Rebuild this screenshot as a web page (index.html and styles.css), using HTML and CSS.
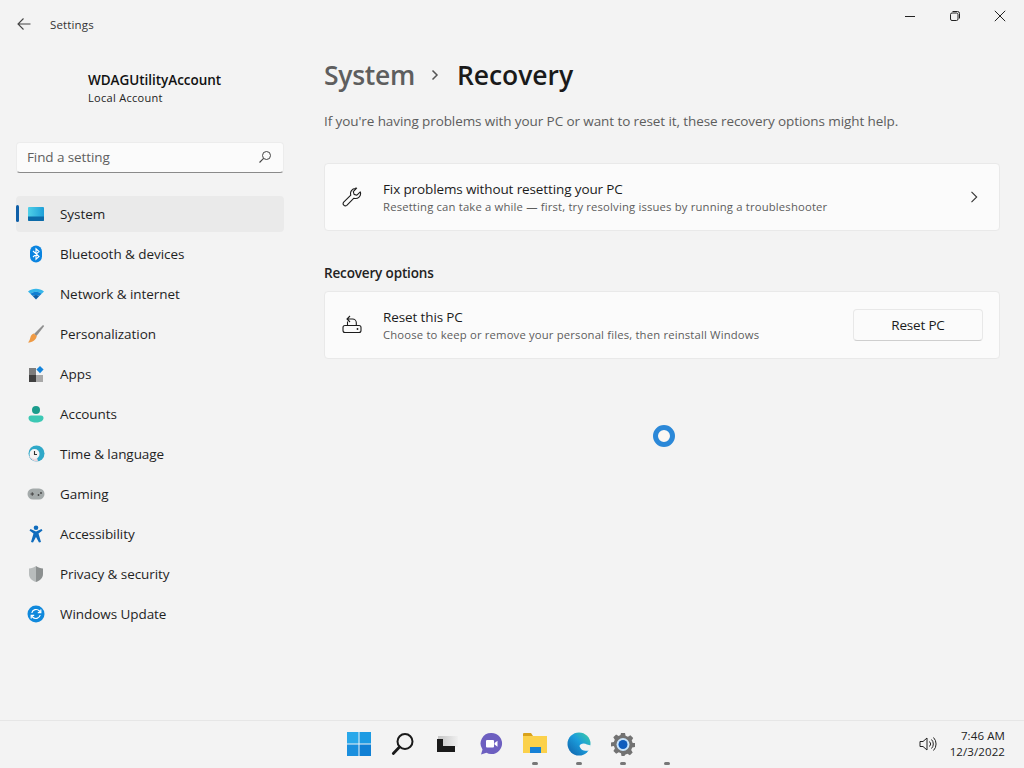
FILE: index.html
```html
<!DOCTYPE html>
<html lang="en">
<head>
<meta charset="utf-8">
<title>Settings</title>
<link rel="stylesheet" href="styles.css">
</head>
<body>
<div class="window">
  <header class="titlebar">
    <svg class="back" width="16" height="16" viewBox="0 0 16 16"><path d="M14.500 8H2M7.500 2.500 2 8l5.500 5.500" fill="none" stroke="#444" stroke-width="1.100"/></svg>
    <span class="app-title">Settings</span>
    <div class="controls">
      <svg width="12" height="12" viewBox="0 0 12 12"><path d="M1 6.500h10" stroke="#222" stroke-width="1"/></svg>
      <svg width="12" height="12" viewBox="0 0 12 12"><rect x="1.500" y="3" width="7.500" height="7.500" rx="1.500" fill="none" stroke="#222"/><path d="M3.500 1.500h5a2 2 0 0 1 2 2v5" fill="none" stroke="#222"/></svg>
      <svg width="12" height="12" viewBox="0 0 12 12"><path d="M.8.8l10.400 10.400M11.200.8.8 11.200" stroke="#222" stroke-width="1"/></svg>
    </div>
  </header>
  <div class="columns">
    <aside class="sidebar">
      <div class="account">
        <div class="account-name">WDAGUtilityAccount</div>
        <div class="account-type">Local Account</div>
      </div>
      <div class="search">
        <span class="search-text">Find a setting</span>
        <svg width="14" height="14" viewBox="0 0 14 14"><circle cx="8.500" cy="5.500" r="4" fill="none" stroke="#444"/><path d="M5.600 8.400 1.500 12.500" stroke="#444" stroke-width="1.100"/></svg>
      </div>
      <nav class="nav">
        <div class="nav-item active">
          <span class="marker"></span>
          <svg class="nav-icon" width="20" height="20" viewBox="0 0 20 20"><defs><linearGradient id="sys" x1="0" y1="0" x2="1" y2="0"><stop offset="0" stop-color="#4fd0e8"/><stop offset="1" stop-color="#1e9fd8"/></linearGradient></defs><rect x="2" y="3" width="16" height="14" rx="1" fill="url(#sys)"/><path d="M2 12.500h16V16a1 1 0 0 1-1 1H3a1 1 0 0 1-1-1z" fill="#0c6aa8"/></svg>
          <span>System</span>
        </div>
        <div class="nav-item">
          <svg class="nav-icon" width="20" height="20" viewBox="0 0 20 20"><rect x="4" y="1.500" width="12" height="17" rx="6" fill="#0a84e0"/><path d="M7 7l6 5.500-3 2.700V4.800l3 2.700L7 13" fill="none" stroke="#fff" stroke-width="1.100"/></svg>
          <span>Bluetooth &amp; devices</span>
        </div>
        <div class="nav-item">
          <svg class="nav-icon" width="20" height="20" viewBox="0 0 20 20"><path d="M2 7.500C6.500 3.800 13.500 3.800 18 7.500l-2.300 2.300C12 7 8 7 4.300 9.800z" fill="#35b6ea"/><path d="M4.300 9.800C8 7 12 7 15.700 9.800l-2.400 2.300c-2-1.400-4.600-1.400-6.600 0z" fill="#0f7fd2"/><path d="M6.700 12.100c2-1.400 4.600-1.400 6.600 0L10 15.500z" fill="#0c5fa8"/></svg>
          <span>Network &amp; internet</span>
        </div>
        <div class="nav-item">
          <svg class="nav-icon" width="20" height="20" viewBox="0 0 20 20"><path d="M17 1 18.200 2 10.500 12 8 10z" fill="#8f8f8f"/><path d="M7.800 9.500 10.800 12C10 16 6.500 18.500 2 18.500c1.500-1.500 2-3.500 2.500-5.500.5-1.800 1.800-3 3.300-3.500z" fill="#ee9a45"/></svg>
          <span>Personalization</span>
        </div>
        <div class="nav-item">
          <svg class="nav-icon" width="20" height="20" viewBox="0 0 20 20"><rect x="3" y="4" width="7" height="7" fill="#7c7c7c"/><rect x="3" y="11" width="7" height="7" fill="#404040"/><rect x="10" y="11" width="7" height="7" fill="#a8a8a8"/><path d="M14 2l3.600 3.600L14 9.200l-3.600-3.600z" fill="#1384dc"/></svg>
          <span>Apps</span>
        </div>
        <div class="nav-item">
          <svg class="nav-icon" width="20" height="20" viewBox="0 0 20 20"><circle cx="10" cy="6" r="4" fill="#1a9c8c"/><path d="M2.500 14a2.500 2.500 0 0 1 2.500-2.500h10a2.500 2.500 0 0 1 2.500 2.500c0 3-3.500 4.500-7.500 4.500S2.500 17 2.500 14z" fill="#3cc8b4"/></svg>
          <span>Accounts</span>
        </div>
        <div class="nav-item">
          <svg class="nav-icon" width="20" height="20" viewBox="0 0 20 20"><circle cx="10.500" cy="9.500" r="8" fill="#2fa8c8"/><path d="M3 12a8 8 0 0 0 9 5.300L10 10z" fill="#ecd5dc"/><circle cx="8.500" cy="10" r="5" fill="#f4f4f4"/><path d="M8.500 7v3.500h2.500" fill="none" stroke="#333" stroke-width="1.100"/></svg>
          <span>Time &amp; language</span>
        </div>
        <div class="nav-item">
          <svg class="nav-icon" width="20" height="20" viewBox="0 0 20 20"><rect x="1.500" y="4.500" width="17" height="11" rx="5.500" fill="#a4aaaa"/><path d="M4.500 10h3.500M6.250 8.250v3.500" stroke="#444" stroke-width="1"/><circle cx="12.500" cy="11" r=".9" fill="#444"/><circle cx="15" cy="9" r=".9" fill="#444"/></svg>
          <span>Gaming</span>
        </div>
        <div class="nav-item">
          <svg class="nav-icon" width="20" height="20" viewBox="0 0 20 20"><circle cx="10" cy="3.800" r="2.300" fill="#0f6cbd"/><path d="M3.500 6.500 4.500 5 10 7.500 15.500 5l1 1.500L12.500 9.500l2.500 8.500-2 .5L10 13 7 18.500 5 18l2.500-8.500z" fill="#0f6cbd"/></svg>
          <span>Accessibility</span>
        </div>
        <div class="nav-item">
          <svg class="nav-icon" width="20" height="20" viewBox="0 0 20 20"><path d="M10 2c2 1.500 4.500 2.300 7 2.500V10c0 4-3 6.800-7 8z" fill="#8c9090"/><path d="M10 2C8 3.500 5.500 4.300 3 4.500V10c0 4 3 6.800 7 8z" fill="#b8bcbc"/></svg>
          <span>Privacy &amp; security</span>
        </div>
        <div class="nav-item">
          <svg class="nav-icon" width="20" height="20" viewBox="0 0 20 20"><circle cx="10" cy="10" r="8.500" fill="#1089dc"/><path d="M5.800 9a4.400 4.400 0 0 1 7.600-2l1 1.200M14.200 11a4.400 4.400 0 0 1-7.600 2l-1-1.200" fill="none" stroke="#fff" stroke-width="1.200"/><path d="M14.800 5.600v3h-3M5.200 14.400v-3h3" fill="none" stroke="#fff" stroke-width="1.200"/></svg>
          <span>Windows Update</span>
        </div>
      </nav>
    </aside>
    <main class="content">
      <h1 class="crumbs">
        <span class="crumb-parent">System</span>
        <svg class="crumb-sep" width="12" height="12" viewBox="0 0 12 12"><path d="M3.500 1.500 8 6l-4.500 4.500" fill="none" stroke="#555" stroke-width="1.500"/></svg>
        <span class="crumb-current">Recovery</span>
      </h1>
      <p class="intro">If you're having problems with your PC or want to reset it, these recovery options might help.</p>
      <section class="card">
        <svg class="card-icon" width="20" height="20" viewBox="0 0 20 20"><path d="M13.500 1.500a5 5 0 0 0-4.700 6.600L1.700 15.200a2.200 2.200 0 0 0 3.100 3.100l7.100-7.100a5 5 0 0 0 6.400-6.300l-3.400 3.300-2.800-.8-.8-2.800 3.300-3.400a5 5 0 0 0-.6-.2z" fill="none" stroke="#1c1c1c" stroke-width="1.100" stroke-linejoin="round"/></svg>
        <div class="card-text">
          <div class="card-title">Fix problems without resetting your PC</div>
          <div class="card-sub">Resetting can take a while — first, try resolving issues by running a troubleshooter</div>
        </div>
        <svg class="chevron" width="12" height="12" viewBox="0 0 12 12"><path d="M3.500 .8 8.700 6l-5.200 5.200" fill="none" stroke="#333" stroke-width="1.100"/></svg>
      </section>
      <h2 class="section-title">Recovery options</h2>
      <section class="card">
        <svg class="card-icon" width="20" height="20" viewBox="0 0 20 20"><rect x="1" y="10.500" width="18" height="7" rx="2" fill="none" stroke="#1c1c1c" stroke-width="1.100"/><circle cx="15.500" cy="14" r=".9" fill="#1c1c1c"/><path d="M8 1 5 4l3 3M5 4h5.500a3.800 3.800 0 0 1 3.800 3.800v2.700M5.500 6.500v4" fill="none" stroke="#1c1c1c" stroke-width="1.100"/></svg>
        <div class="card-text">
          <div class="card-title">Reset this PC</div>
          <div class="card-sub">Choose to keep or remove your personal files, then reinstall Windows</div>
        </div>
        <button class="button">Reset PC</button>
      </section>
    </main>
  </div>
  <div class="spinner"></div>
</div>
<footer class="taskbar">
  <div class="task-icons">
    <div class="task"><svg width="24" height="24" viewBox="0 0 24 24"><rect x="0" y="0" width="11.500" height="11.500" fill="#29a8ea"/><rect x="12.500" y="0" width="11.500" height="11.500" fill="#1d9be3"/><rect x="0" y="12.500" width="11.500" height="11.500" fill="#1a8fde"/><rect x="12.500" y="12.500" width="11.500" height="11.500" fill="#1180d4"/></svg></div>
    <div class="task"><svg width="24" height="24" viewBox="0 0 24 24"><circle cx="14" cy="9.500" r="7.500" fill="none" stroke="#1a1a1a" stroke-width="2"/><path d="M8.500 15 2.300 21.500" stroke="#1a1a1a" stroke-width="2.800" stroke-linecap="round"/></svg></div>
    <div class="task"><svg width="24" height="24" viewBox="0 0 24 24"><defs><linearGradient id="view" x1="0" y1="0" x2="1" y2="0"><stop offset="0" stop-color="#c4c4c4"/><stop offset="1" stop-color="#f0f0f0"/></linearGradient></defs><rect x="3" y="4" width="20" height="11" fill="url(#view)"/><path d="M2 7h6v7h12v6H2z" fill="#1a1a1a"/></svg></div>
    <div class="task"><svg width="24" height="24" viewBox="0 0 24 24"><path d="M12.500 1a10.500 10.500 0 1 1-5 19.700L2 22.500l1.500-5A10.500 10.500 0 0 1 12.500 1z" fill="#6d5fc0"/><rect x="7" y="8" width="8" height="7.500" rx="1" fill="#fff"/><path d="M15.500 11l3-2.200v6l-3-2.200z" fill="#fff"/></svg></div>
    <div class="task dot"><svg width="26" height="24" viewBox="0 0 26 24"><path d="M1 2a1 1 0 0 1 1-1h7l2 3H1z" fill="#d9a21b"/><path d="M1 4h24v17H1z" fill="#fbd14b"/><rect x="8" y="15" width="11" height="6" fill="#1681d6"/></svg></div>
    <div class="task dot"><svg width="24" height="24" viewBox="0 0 24 24"><defs><linearGradient id="edge" x1="1" y1="0" x2="0" y2="1"><stop offset="0" stop-color="#3fd0a0"/><stop offset=".45" stop-color="#1b9ddb"/><stop offset="1" stop-color="#0f5ea8"/></linearGradient></defs><circle cx="12" cy="12" r="11.500" fill="url(#edge)"/><path d="M12.500 14C13 11.500 17 10.500 20 12.500L24 13.500 23 18C19 20 13.500 18.500 12.500 14z" fill="#f3f3f3"/></svg></div>
    <div class="task dot"><svg width="24" height="24" viewBox="0 0 24 24"><path d="M10 1h4l.6 2.800 2.300 1 2.500-1.500 2.800 2.800-1.500 2.500 1 2.300L24 11v4l-2.800.6-1 2.300 1.500 2.500-2.800 2.800-2.500-1.500-2.300 1L13.500 24h-3l-.5-2.800-2.300-1-2.500 1.500-2.800-2.800 1.500-2.500-1-2.300L0 14.500v-4l2.800-.5 1-2.300L2.300 5.200 5.100 2.400l2.500 1.500 1.900-.9z" fill="#727272"/><circle cx="12" cy="12.500" r="6.500" fill="#c7e3fb"/><circle cx="12" cy="12.500" r="4.500" fill="#0f5cbd"/></svg></div>
    <div class="task dot"></div>
  </div>
  <div class="tray">
    <svg width="18" height="16" viewBox="0 0 18 16"><path d="M1 5.500h3L8 2v12l-4-3.500H1z" fill="none" stroke="#222" stroke-width="1"/><path d="M10.500 5.500a3.500 3.500 0 0 1 0 5M12.500 3.500a6.500 6.500 0 0 1 0 9M14.500 1.500a9.500 9.500 0 0 1 0 13" fill="none" stroke="#222" stroke-width="1"/></svg>
    <div class="clock"><div>7:46 AM</div><div>12/3/2022</div></div>
  </div>
</footer>
</body>
</html>
```

FILE: styles.css
```css
* { box-sizing: border-box; }
html, body { margin: 0; height: 100%; }
body {
  width: 1024px;
  height: 768px;
  overflow: hidden;
  display: flex;
  flex-direction: column;
  background: #f3f3f3;
  color: #1b1b1b;
  font-family: "Open Sans", "Noto Sans", "Liberation Sans", sans-serif;
  font-size: 14px;
}
.window { position: relative; flex: 1; display: flex; flex-direction: column; min-height: 0; }
.titlebar { height: 48px; display: flex; align-items: center; padding-left: 16px; }
.back { margin-right: 18px; }
.app-title { font-size: 11.500px; color: #333; letter-spacing: .15px; }
.controls { margin-left: auto; display: flex; gap: 33px; padding-right: 18px; margin-top: -17px; }
.columns { flex: 1; display: flex; min-height: 0; }
.sidebar { width: 300px; padding-left: 16px; padding-right: 16px; flex: none; }
.account { padding: 22px 0 0 72px; height: 94px; }
.account-name { font-weight: 600; font-size: 13.500px; line-height: 20px; letter-spacing: -.03px; color: #111; }
.account-type { font-size: 11px; line-height: 16px; color: #222; letter-spacing: .3px; }
.search {
  height: 31px;
  background: #fbfbfb;
  border: 1px solid #ececec;
  border-bottom: 1px solid #8a8a8a;
  border-radius: 4px;
  display: flex;
  align-items: center;
  justify-content: space-between;
  padding: 0 11px 2px 10px;
}
.search-text { color: #5f5f5f; font-size: 13.500px; letter-spacing: -.1px; }
.nav { margin-top: 23px; display: flex; flex-direction: column; gap: 4px; }
.nav-item {
  position: relative;
  height: 36px;
  display: flex;
  align-items: center;
  gap: 14px;
  padding-left: 10px;
  border-radius: 4px;
  font-size: 13.500px;
  letter-spacing: -.06px;
  color: #1f1f1f;
}
.nav-item.active { background: #eaeaea; }
.marker {
  position: absolute;
  left: 0;
  top: 9px;
  width: 3px;
  height: 17px;
  border-radius: 2px;
  background: #0f5fa8;
}
.nav-icon { flex: none; }
.content { flex: 1; padding: 0 24px; min-width: 0; }
.crumbs {
  margin: 0;
  height: 54px;
  display: flex;
  align-items: center;
  font-size: 26.500px;
  font-weight: 600;
  letter-spacing: -.3px;
  color: #1a1a1a;
}
.crumb-parent { color: #5e5e5e; }
.crumb-sep { margin: 0 16px 0 14px; }
.crumb-current { letter-spacing: -.05px; }
.intro { margin: 0; height: 61px; padding-top: 9px; font-size: 13.500px; line-height: 20px; color: #5d5d5d; letter-spacing: -.09px; }
.card {
  height: 68px;
  background: #fbfbfb;
  border: 1px solid #e9e9e9;
  border-radius: 4px;
  display: flex;
  align-items: center;
  padding: 0 16px 0 17px;
}
.card-icon { flex: none; margin-right: 21px; }
.card-text { flex: 1; min-width: 0; }
.card-title { font-size: 13.500px; line-height: 19px; color: #1c1c1c; letter-spacing: -.12px; }
.card-sub { font-size: 11.300px; line-height: 16px; color: #5d5d5d; letter-spacing: .16px; }
.chevron { margin-right: 3px; }
.section-title { margin: 0; height: 60px; padding-top: 32px; font-size: 13.500px; line-height: 20px; font-weight: 600; letter-spacing: -.15px; color: #222; }
.button {
  width: 130px;
  height: 32px;
  background: #fbfbfb;
  border: 1px solid #e8e8e8;
  border-bottom-color: #cfcfcf;
  border-radius: 4px;
  font: inherit;
  font-size: 13.500px;
  color: #1c1c1c;
  letter-spacing: -.2px;
}
.spinner {
  position: absolute;
  left: 653px;
  top: 425px;
  width: 22px;
  height: 22px;
  border-radius: 50%;
  border: 5px solid #2b88d8;
  background: #fdf8f3;
}
.taskbar {
  height: 48px;
  flex: none;
  border-top: 1px solid #e6e6e6;
  background: #f3f3f3;
  padding-bottom: 2px;
  display: flex;
  align-items: center;
}
.task-icons { margin-left: 337px; display: flex; }
.task { position: relative; width: 44px; height: 44px; display: flex; align-items: center; justify-content: center; }
.task.dot::after {
  content: "";
  position: absolute;
  bottom: 1px;
  left: 50%;
  margin-left: -3px;
  width: 6px;
  height: 3px;
  border-radius: 2px;
  background: #777;
}
.tray { margin-left: auto; display: flex; align-items: center; gap: 13px; padding-right: 19px; }
.clock { font-size: 11.500px; line-height: 16px; text-align: right; color: #222; letter-spacing: .1px; }
```
